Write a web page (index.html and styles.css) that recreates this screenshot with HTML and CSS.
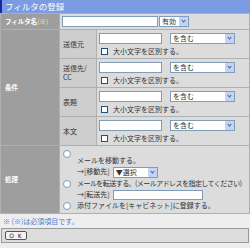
FILE: index.html
```html
<!DOCTYPE html>
<html lang="ja">
<head>
    <meta charset="UTF-8">
    <title>フィルタの登録</title>
    <link rel="stylesheet" href="styles.css">
</head>
<body>

    <!-- Title -->
    <div class="title">フィルタの登録</div>

    <!-- Filter form -->
    <table class="form">
        <colgroup>
            <col class="col-head">
            <col class="col-sub">
            <col class="col-val">
        </colgroup>
        <tr class="row-name">
            <th class="head">フィルタ名<span class="req">(※)</span></th>
            <td class="val" colspan="2">
                <div class="cond-line">
                    <input type="text" class="txt txt-name">
                    <span class="sel sel-state"><select><option>有効</option></select></span>
                </div>
            </td>
        </tr>
        <tr class="row-cond">
            <th class="head" rowspan="4">条件</th>
            <th class="sub">送信元</th>
            <td class="val">
                <div class="cond-line">
                    <input type="text" class="txt txt-cond">
                    <span class="sel sel-match"><select><option>を含む</option></select></span>
                </div>
                <label class="chk-line"><input type="checkbox" class="chk">大小文字を区別する。</label>
            </td>
        </tr>
        <tr class="row-cond">
            <th class="sub">送信先/<br>CC</th>
            <td class="val">
                <div class="cond-line">
                    <input type="text" class="txt txt-cond">
                    <span class="sel sel-match"><select><option>を含む</option></select></span>
                </div>
                <label class="chk-line"><input type="checkbox" class="chk">大小文字を区別する。</label>
            </td>
        </tr>
        <tr class="row-cond">
            <th class="sub">表題</th>
            <td class="val">
                <div class="cond-line">
                    <input type="text" class="txt txt-cond">
                    <span class="sel sel-match"><select><option>を含む</option></select></span>
                </div>
                <label class="chk-line"><input type="checkbox" class="chk">大小文字を区別する。</label>
            </td>
        </tr>
        <tr class="row-cond">
            <th class="sub">本文</th>
            <td class="val">
                <div class="cond-line">
                    <input type="text" class="txt txt-cond">
                    <span class="sel sel-match"><select><option>を含む</option></select></span>
                </div>
                <label class="chk-line"><input type="checkbox" class="chk">大小文字を区別する。</label>
            </td>
        </tr>
        <tr class="row-act">
            <th class="head">処理</th>
            <td class="val act" colspan="2">
                <div class="opt opt-move">
                    <span class="rb"></span>
                    <div class="opt-body">
                        <div class="line">メールを移動する。</div>
                        <div class="line">→[移動先]<span class="sel sel-folder"><select><option>▼選択</option></select></span></div>
                    </div>
                </div>
                <div class="opt">
                    <span class="rb"></span>
                    <div class="opt-body opt-fwd">
                        <div class="line line-long">メールを転送する。(メールアドレスを指定してください)</div>
                        <div class="line line-fwd">
                            <span class="fwd-label">→[転送先]</span>
                            <input type="text" class="txt txt-fwd">
                        </div>
                    </div>
                </div>
                <div class="opt">
                    <span class="rb"></span>
                    <div class="opt-body">
                        <div class="line">添付ファイルを[キャビネット]に登録する。</div>
                    </div>
                </div>
            </td>
        </tr>
    </table>

    <p class="note">※ (※)は必須項目です。</p>

    <!-- Buttons -->
    <div class="bar">
        <button class="btn">O K</button>
    </div>

</body>
</html>
```

FILE: styles.css
```css
/* Reset */
* {
    margin: 0;
    padding: 0;
    box-sizing: border-box;
}

body {
    width: 250px;
    background: #eeeeee;
    color: #333;
    font-family: "Noto Sans CJK JP", "Noto Sans", sans-serif;
    font-size: 7px;
    line-height: 9px;
}

/* Title */
.title {
    height: 13px;
    line-height: 13px;
    padding-left: 3px;
    background: #7b9be3;
    border-left: 2px solid #1a2a9a;
    color: #fff;
    font-size: 8.5px;
}

/* Form table */
.form {
    width: 250px;
    border-collapse: collapse;
    table-layout: fixed;
}

.col-head { width: 59px; }
.col-sub { width: 37px; }

.form th,
.form td {
    border: 1px solid #b0b0b0;
    vertical-align: middle;
}

.head {
    padding-left: 4px;
    background: #9e9e9e;
    color: #fff;
    font-size: 6.5px;
    font-weight: bold;
    text-align: left;
    white-space: nowrap;
}

.req {
    color: #f4ec9a;
    font-weight: normal;
}

.sub {
    padding-left: 3px;
    background: #cecece;
    font-weight: normal;
    text-align: left;
}

.val {
    background: #dcdcdc;
}

.row-name .val {
    height: 16px;
    padding: 0 2px;
}

.row-cond .val {
    height: 29px;
    padding: 2px 2px 2px 2px;
}

/* Controls */
.txt {
    flex: none;
    height: 11px;
    border: 1px solid #7f9db9;
    background: #fff;
}

.txt-name { width: 96px; }
.txt-cond { width: 63px; }

.sel {
    position: relative;
    display: inline-block;
    flex: none;
    vertical-align: middle;
}

.sel select {
    display: block;
    width: 100%;
    height: 11px;
    padding-left: 2px;
    border: 1px solid #7f9db9;
    background: #fff;
    color: #333;
    font-family: inherit;
    font-size: 7px;
    line-height: 9px;
    appearance: none;
    -webkit-appearance: none;
}

.sel::after {
    content: "";
    position: absolute;
    top: 1px;
    right: 1px;
    width: 9px;
    height: 9px;
    border-radius: 1px;
    background: #c3d3f7;
}

.sel::before {
    content: "";
    position: absolute;
    z-index: 1;
    top: 3px;
    right: 4px;
    width: 2px;
    height: 2px;
    border-right: 1px solid #4d6185;
    border-bottom: 1px solid #4d6185;
    transform: rotate(45deg);
}

.sel-state { width: 30px; margin-left: 1px; }
.sel-match { width: 65px; margin-left: 8px; }
.sel-folder { width: 45px; margin-left: 3px; }

.cond-line {
    display: flex;
    align-items: center;
}

.chk-line {
    display: flex;
    align-items: center;
    height: 9px;
    margin-top: 3px;
    padding-left: 2px;
}

.chk {
    flex: none;
    width: 7px;
    height: 7px;
    margin-right: 5px;
    border: 1px solid #1c5180;
    background: #fff;
    appearance: none;
    -webkit-appearance: none;
}

/* Action section */
.act {
    height: 68px;
    padding: 2px 2px 1px 3px;
}

.opt {
    display: flex;
    align-items: flex-start;
}

.opt-fwd {
    flex: 1;
    min-width: 0;
}

.rb {
    flex: none;
    width: 8px;
    height: 8px;
    margin: 1px 6px 0 0;
    border: 1px solid #7f9db9;
    border-radius: 50%;
    background: #fff;
}

.line {
    height: 11px;
    line-height: 11px;
    white-space: nowrap;
}

.line-long {
    letter-spacing: -0.55px;
}

.line-fwd {
    display: flex;
    align-items: center;
}

.fwd-label {
    flex: none;
}

.txt-fwd {
    flex: 0 0 90px;
    width: 90px;
    height: 10px;
    margin-left: 3px;
}

.opt-move .opt-body {
    margin-top: 6px;
}

.opt-move + .opt {
    margin-top: 1px;
}

.opt + .opt .rb {
    margin-top: 2px;
}

/* Note and button bar */
.note {
    height: 14px;
    padding: 3px 3px 0;
    color: #4a7fd0;
}

.bar {
    height: 15px;
    margin: 0 1px;
    padding: 2px 3px;
    border: 1px solid #9a9a9a;
    background: #dddddd;
}

.btn {
    display: block;
    width: 22px;
    height: 9px;
    border: 1px solid #555;
    border-radius: 2px;
    background: #f4f4f4;
    color: #222;
    font-family: "DejaVu Sans", sans-serif;
    font-size: 6px;
    line-height: 7px;
    letter-spacing: 1px;
}
```
